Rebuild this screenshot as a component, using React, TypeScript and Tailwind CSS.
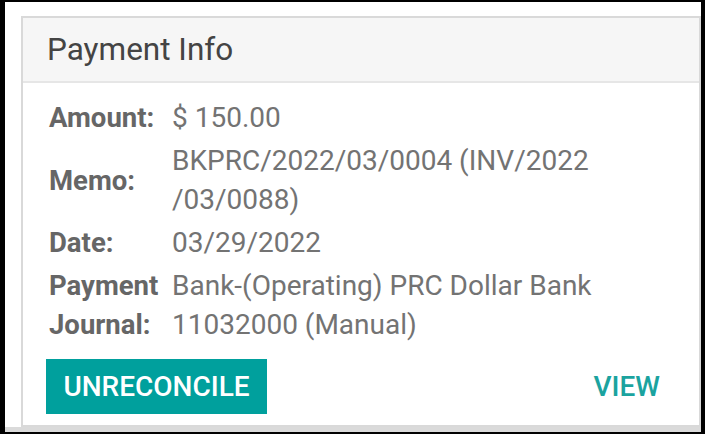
const rows = [
  { label: "Amount:", value: ["$ 150.00"] },
  { label: "Memo:", value: ["BKPRC/2022/03/0004 (INV/2022", "/03/0088)"] },
  { label: "Date:", value: ["03/29/2022"] },
  { label: ["Payment", "Journal:"], value: ["Bank-(Operating) PRC Dollar Bank", "11032000 (Manual)"] },
];

export default function App() {
  return (
    <div className="w-[705px] h-[434px] bg-black pl-[5px] pt-[2px] pr-[4px] pb-[2px] font-['Roboto',sans-serif]">
      <div className="h-full bg-white flex flex-col">
        <div className="flex-1 pl-[16px] pt-[14px]">
          <div className="h-[411px] border-2 border-[#d9d9d9] flex flex-col">
            <div className="h-[65px] bg-[#f6f6f6] border-b-2 border-[#e6e6e6] pl-[24px] flex items-center">
              <h2 className="text-[31.5px] text-[#444]">Payment Info</h2>
            </div>
            <div className="flex-1 pl-[26px] pr-[39px] pt-[13px] flex flex-col">
              <div className="grid grid-cols-[123px_1fr] text-[28px] leading-[39px]">
                {rows.map((row, i) => (
                  <div key={i} className="contents">
                    <div className="py-[2px] flex flex-col justify-center font-bold text-[#666] text-[27.5px]">
                      {Array.isArray(row.label)
                        ? row.label.map((l) => <span key={l}>{l}</span>)
                        : <span>{row.label}</span>}
                    </div>
                    <div className="py-[2px] flex flex-col text-[#737373]">
                      {row.value.map((v) => (
                        <span key={v} className="whitespace-nowrap">{v}</span>
                      ))}
                    </div>
                  </div>
                ))}
              </div>
              <div className="mt-[13px] -ml-[3px] flex items-center justify-between">
                <button className="h-[55px] w-[221px] bg-[#00a09d] text-white text-[28px] font-medium uppercase">
                  Unreconcile
                </button>
                <a className="text-[28px] font-medium uppercase text-[#1ba39f]">View</a>
              </div>
            </div>
          </div>
        </div>
        <div className="h-[5px] bg-[#dadada]" />
      </div>
    </div>
  );
}
